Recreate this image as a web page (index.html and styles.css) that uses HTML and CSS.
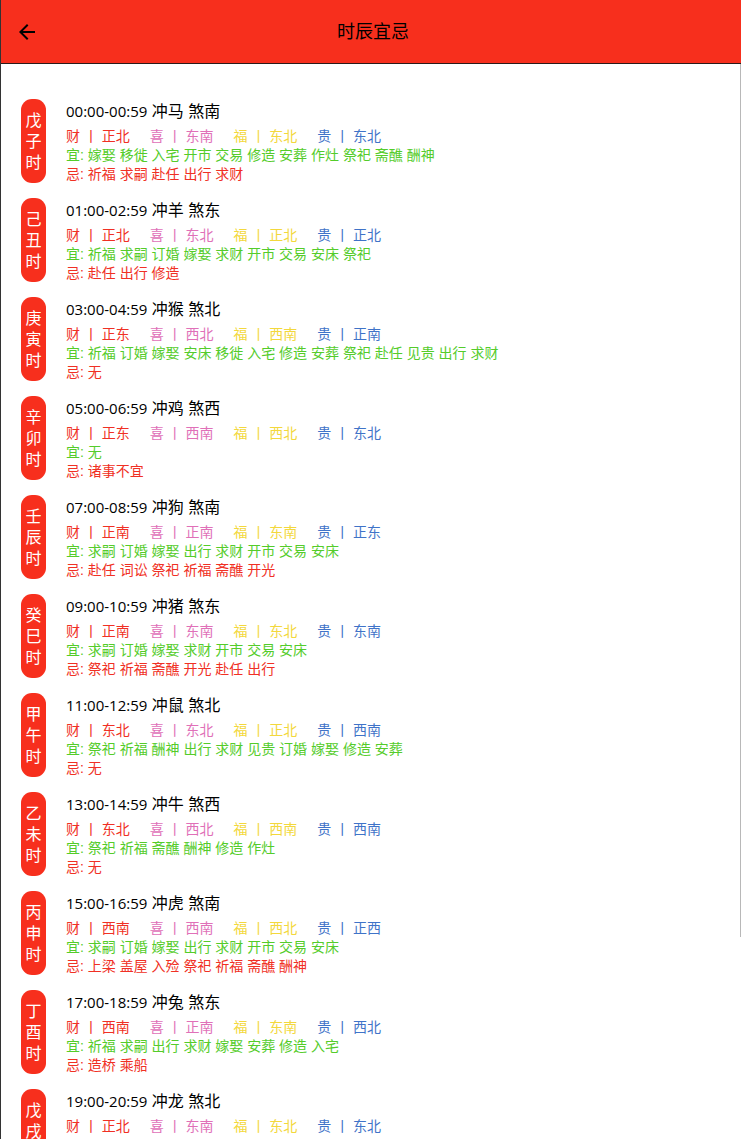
FILE: index.html
```html
<!DOCTYPE html>
<html lang="zh-CN">
<head>
<meta charset="utf-8">
<meta name="viewport" content="width=device-width, initial-scale=1">
<title>时辰宜忌</title>
<link rel="stylesheet" href="styles.css">
</head>
<body>
<div class="app">
<header class="bar">
<button class="back" type="button" aria-label="返回"><svg viewBox="0 0 24 24" width="24" height="24" aria-hidden="true"><path d="M20 11H7.83l5.59-5.59L12 4l-8 8 8 8 1.41-1.41L7.83 13H20z"/></svg></button>
<h1 class="title">时辰宜忌</h1>
</header>
<main class="content">
<ul class="hours">
<li class="hour"><div class="pill">戊子时</div><div class="info"><h2 class="head"><span class="time">00:00-00:59</span> 冲马 煞南</h2><div class="gods"><span class="cai">财 丨 正北</span><span class="xi">喜 丨 东南</span><span class="fu">福 丨 东北</span><span class="gui">贵 丨 东北</span></div><p class="yi">宜: 嫁娶 移徙 入宅 开市 交易 修造 安葬 作灶 祭祀 斋醮 酬神</p><p class="ji">忌: 祈福 求嗣 赴任 出行 求财</p></div></li>
<li class="hour"><div class="pill">己丑时</div><div class="info"><h2 class="head"><span class="time">01:00-02:59</span> 冲羊 煞东</h2><div class="gods"><span class="cai">财 丨 正北</span><span class="xi">喜 丨 东北</span><span class="fu">福 丨 正北</span><span class="gui">贵 丨 正北</span></div><p class="yi">宜: 祈福 求嗣 订婚 嫁娶 求财 开市 交易 安床 祭祀</p><p class="ji">忌: 赴任 出行 修造</p></div></li>
<li class="hour"><div class="pill">庚寅时</div><div class="info"><h2 class="head"><span class="time">03:00-04:59</span> 冲猴 煞北</h2><div class="gods"><span class="cai">财 丨 正东</span><span class="xi">喜 丨 西北</span><span class="fu">福 丨 西南</span><span class="gui">贵 丨 正南</span></div><p class="yi">宜: 祈福 订婚 嫁娶 安床 移徙 入宅 修造 安葬 祭祀 赴任 见贵 出行 求财</p><p class="ji">忌: 无</p></div></li>
<li class="hour"><div class="pill">辛卯时</div><div class="info"><h2 class="head"><span class="time">05:00-06:59</span> 冲鸡 煞西</h2><div class="gods"><span class="cai">财 丨 正东</span><span class="xi">喜 丨 西南</span><span class="fu">福 丨 西北</span><span class="gui">贵 丨 东北</span></div><p class="yi">宜: 无</p><p class="ji">忌: 诸事不宜</p></div></li>
<li class="hour"><div class="pill">壬辰时</div><div class="info"><h2 class="head"><span class="time">07:00-08:59</span> 冲狗 煞南</h2><div class="gods"><span class="cai">财 丨 正南</span><span class="xi">喜 丨 正南</span><span class="fu">福 丨 东南</span><span class="gui">贵 丨 正东</span></div><p class="yi">宜: 求嗣 订婚 嫁娶 出行 求财 开市 交易 安床</p><p class="ji">忌: 赴任 词讼 祭祀 祈福 斋醮 开光</p></div></li>
<li class="hour"><div class="pill">癸巳时</div><div class="info"><h2 class="head"><span class="time">09:00-10:59</span> 冲猪 煞东</h2><div class="gods"><span class="cai">财 丨 正南</span><span class="xi">喜 丨 东南</span><span class="fu">福 丨 东北</span><span class="gui">贵 丨 东南</span></div><p class="yi">宜: 求嗣 订婚 嫁娶 求财 开市 交易 安床</p><p class="ji">忌: 祭祀 祈福 斋醮 开光 赴任 出行</p></div></li>
<li class="hour"><div class="pill">甲午时</div><div class="info"><h2 class="head"><span class="time">11:00-12:59</span> 冲鼠 煞北</h2><div class="gods"><span class="cai">财 丨 东北</span><span class="xi">喜 丨 东北</span><span class="fu">福 丨 正北</span><span class="gui">贵 丨 西南</span></div><p class="yi">宜: 祭祀 祈福 酬神 出行 求财 见贵 订婚 嫁娶 修造 安葬</p><p class="ji">忌: 无</p></div></li>
<li class="hour"><div class="pill">乙未时</div><div class="info"><h2 class="head"><span class="time">13:00-14:59</span> 冲牛 煞西</h2><div class="gods"><span class="cai">财 丨 东北</span><span class="xi">喜 丨 西北</span><span class="fu">福 丨 西南</span><span class="gui">贵 丨 西南</span></div><p class="yi">宜: 祭祀 祈福 斋醮 酬神 修造 作灶</p><p class="ji">忌: 无</p></div></li>
<li class="hour"><div class="pill">丙申时</div><div class="info"><h2 class="head"><span class="time">15:00-16:59</span> 冲虎 煞南</h2><div class="gods"><span class="cai">财 丨 西南</span><span class="xi">喜 丨 西南</span><span class="fu">福 丨 西北</span><span class="gui">贵 丨 正西</span></div><p class="yi">宜: 求嗣 订婚 嫁娶 出行 求财 开市 交易 安床</p><p class="ji">忌: 上梁 盖屋 入殓 祭祀 祈福 斋醮 酬神</p></div></li>
<li class="hour"><div class="pill">丁酉时</div><div class="info"><h2 class="head"><span class="time">17:00-18:59</span> 冲兔 煞东</h2><div class="gods"><span class="cai">财 丨 西南</span><span class="xi">喜 丨 正南</span><span class="fu">福 丨 东南</span><span class="gui">贵 丨 西北</span></div><p class="yi">宜: 祈福 求嗣 出行 求财 嫁娶 安葬 修造 入宅</p><p class="ji">忌: 造桥 乘船</p></div></li>
<li class="hour"><div class="pill">戊戌时</div><div class="info"><h2 class="head"><span class="time">19:00-20:59</span> 冲龙 煞北</h2><div class="gods"><span class="cai">财 丨 正北</span><span class="xi">喜 丨 东南</span><span class="fu">福 丨 东北</span><span class="gui">贵 丨 东北</span></div></div></li>
</ul>
<div class="thumb"></div>
</main>
</div>
</body>
</html>
```

FILE: styles.css
```css
* {
  box-sizing: border-box;
  margin: 0;
  padding: 0;
}

body {
  background: #fff;
  color: #000;
  font-family: "Liberation Sans", "Noto Sans CJK SC", sans-serif;
  font-size: 14px;
  line-height: 19px;
}

.app {
  display: flex;
  flex-direction: column;
  height: 100vh;
  border-left: 1px solid #333;
  overflow: hidden;
}

.bar {
  display: grid;
  grid-template-columns: 52px 1fr 48px;
  align-items: center;
  flex: none;
  height: 64px;
  background: #f72f1d;
  border-bottom: 1px solid #2b1a1a;
}

.back {
  display: flex;
  justify-self: center;
  border: 0;
  background: none;
  cursor: pointer;
}

.title {
  font-size: 18px;
  font-weight: 400;
  line-height: 24px;
  text-align: center;
}

.content {
  position: relative;
  flex: 1;
  min-height: 0;
  overflow: hidden;
}

.hours {
  display: flex;
  flex-direction: column;
  gap: 14px;
  padding: 35px 20px;
  list-style: none;
}

.hour {
  display: flex;
  align-items: flex-start;
  gap: 20px;
}

.pill {
  flex: none;
  width: 25px;
  padding: 11px 4px 10px;
  border-radius: 11px;
  background: #f72f1d;
  color: #fff;
  font-size: 16px;
  line-height: 21px;
  text-align: center;
  word-break: break-all;
}

.info {
  flex: 1;
  min-width: 0;
}

.head {
  margin-bottom: 3px;
  font-size: 16px;
  font-weight: 400;
  line-height: 25px;
}

.time {
  font-family: "Open Sans", sans-serif;
  font-size: 15px;
}

.gods {
  display: flex;
  flex-wrap: wrap;
  column-gap: 20px;
}

.cai,
.ji {
  color: #f03024;
}

.xi {
  color: #e070b8;
}

.fu {
  color: #f3d83c;
}

.gui {
  color: #3f73c8;
}

.yi {
  color: #54cc2a;
}

.thumb {
  position: absolute;
  top: 0;
  right: 0;
  width: 1px;
  height: 81.2%;
  background: #b8b8b8;
}
```
